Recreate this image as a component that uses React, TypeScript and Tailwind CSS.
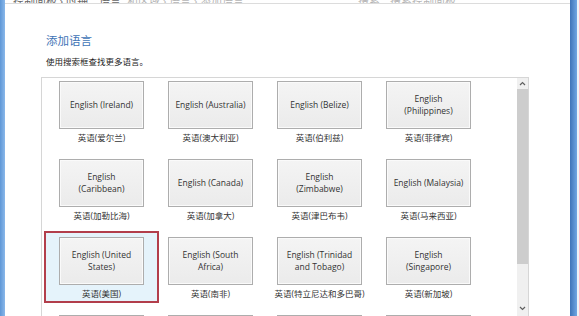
import React from 'react';

type Lang = { en: string[]; zh: string; selected?: boolean };

const langs: Lang[] = [
  { en: ['English (Ireland)'], zh: '英语(爱尔兰)' },
  { en: ['English (Australia)'], zh: '英语(澳大利亚)' },
  { en: ['English (Belize)'], zh: '英语(伯利兹)' },
  { en: ['English', '(Philippines)'], zh: '英语(菲律宾)' },
  { en: ['English', '(Caribbean)'], zh: '英语(加勒比海)' },
  { en: ['English (Canada)'], zh: '英语(加拿大)' },
  { en: ['English', '(Zimbabwe)'], zh: '英语(津巴布韦)' },
  { en: ['English (Malaysia)'], zh: '英语(马来西亚)' },
  { en: ['English (United', 'States)'], zh: '英语(美国)', selected: true },
  { en: ['English (South', 'Africa)'], zh: '英语(南非)' },
  { en: ['English (Trinidad', 'and Tobago)'], zh: '英语(特立尼达和多巴哥)' },
  { en: ['English', '(Singapore)'], zh: '英语(新加坡)' },
  { en: ['English (India)'], zh: '英语(印度)' },
  { en: ['English (Jamaica)'], zh: '英语(牙买加)' },
  { en: ['English (New', 'Zealand)'], zh: '英语(新西兰)' },
  { en: ['English (Hong', 'Kong SAR)'], zh: '英语(香港特别行政区)' },
];

const font = { fontFamily: '"Open Sans", "Noto Sans", "Noto Sans CJK SC", sans-serif' };

function LangTile({ lang }: { lang: Lang }) {
  return (
    <div
      className={`flex h-[66px] w-[109px] flex-col items-center pt-[3px] ${
        lang.selected ? 'bg-[#e5f3fb] shadow-[0_0_0_1px_#e5f3fb,0_0_0_3px_#b23e4b]' : ''
      }`}
    >
      <div className="flex h-[48px] w-[85px] flex-col items-center justify-center border border-[#adadad] bg-gradient-to-b from-[#f4f4f4] to-[#ebebeb] text-[8.5px] leading-[12px] text-[#333] shadow-[inset_0_0_0_1px_#fafafa]">
        {lang.en.map((line) => (
          <span key={line} className="whitespace-nowrap">
            {line}
          </span>
        ))}
      </div>
      <div className="mt-[3px] whitespace-nowrap text-[8.5px] leading-[12px] text-[#333]">{lang.zh}</div>
    </div>
  );
}

function Chevron({ up }: { up?: boolean }) {
  return (
    <svg width="7" height="5" viewBox="0 0 7 5" className={up ? '' : 'rotate-180'}>
      <path d="M1 4 L3.5 1.5 L6 4" fill="none" stroke="#606060" strokeWidth="1.2" />
    </svg>
  );
}

export default function App() {
  return (
    <div className="flex h-[316px] w-[579px] overflow-hidden bg-white" style={font}>
      <div className="w-[5px] shrink-0 bg-gradient-to-r from-[#5f97d6] to-[#8ab8ea]" />
      <div className="flex min-w-0 flex-1 flex-col">
        {/* address bar, only its lower edge is in view */}
        <div className="flex h-[4px] shrink-0 items-end overflow-hidden border-b border-[#dcdcdc]">
          <div className="-mb-[4px] ml-[8px] flex gap-[6px] whitespace-nowrap text-[11px] leading-[12px] text-[#666]">
            <span>控制面板 › 时钟、语言</span>
            <span className="text-[#b5b5b5]">和区域 › 语言 › 添加语言</span>
          </div>
          <div className="ml-auto mr-[10px] -mb-[4px] flex gap-[10px] whitespace-nowrap text-[11px] leading-[12px] text-[#b5b5b5]">
            <span>搜索</span>
            <span className="w-[170px]">搜索控制面板</span>
          </div>
        </div>

        <div className="pl-[36px]">
          <h1 className="mt-[30px] pl-[5px] text-[11.5px] leading-[14px] text-[#3f74b6]">添加语言</h1>
          <p className="mt-[8px] pl-[5px] text-[8.5px] leading-[12px] text-[#222]">使用搜索框查找更多语言。</p>

          <div className="mt-[9px] flex h-[244px] w-[488px] border border-b-0 border-[#d6d6d6]">
            <div className="grid flex-1 grid-cols-[repeat(4,109px)] content-start gap-y-[12px] pl-[5px]">
              {langs.map((l) => (
                <LangTile key={l.zh} lang={l} />
              ))}
            </div>
            <div className="flex w-[11px] flex-col bg-[#f0f0f0]">
              <div className="flex h-[11px] items-center justify-center">
                <Chevron up />
              </div>
              <div className="h-[175px] bg-[#cdcdcd]" />
              <div className="flex-1" />
              <div className="mb-[7px] flex h-[11px] items-center justify-center">
                <Chevron />
              </div>
            </div>
          </div>
        </div>
      </div>
      <div className="w-[7px] shrink-0 bg-gradient-to-r from-[#3e74b8] to-[#6fa6e2]" />
      <div className="w-[2px] shrink-0 bg-[#eef3f8]" />
    </div>
  );
}
